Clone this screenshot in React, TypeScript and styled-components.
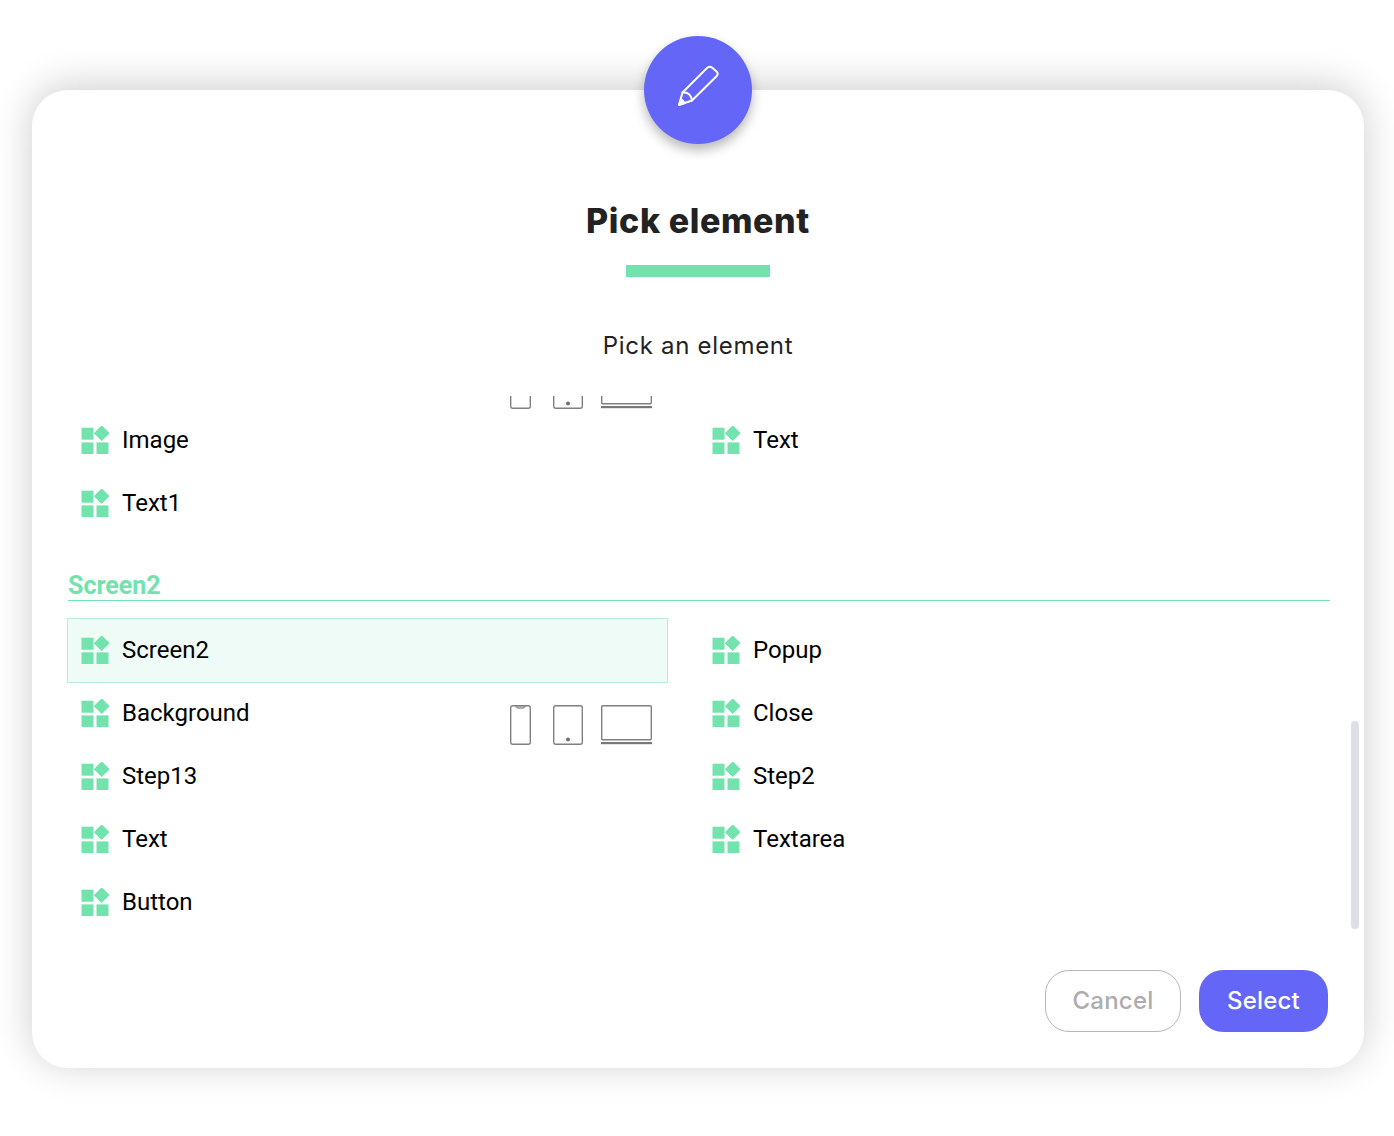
import React from "react";
import styled, { createGlobalStyle } from "styled-components";

const Global = createGlobalStyle`
  html, body { margin: 0; padding: 0; background: #fff; }
  body { font-family: "Roboto", "Liberation Sans", sans-serif; }
`;

const Page = styled.div`
  width: 1394px;
  height: 1136px;
  padding: 90px 30px 0 32px;
  box-sizing: border-box;
  overflow: hidden;
`;

const Card = styled.section`
  position: relative;
  width: 1332px;
  height: 978px;
  box-sizing: border-box;
  padding: 111px 34px 36px 36px;
  background: #fff;
  border-radius: 36px;
  box-shadow: 0 -4px 40px rgba(0, 0, 0, 0.2);
  display: flex;
  flex-direction: column;
`;

const Badge = styled.div`
  position: absolute;
  left: 612px;
  top: -54px;
  width: 108px;
  height: 108px;
  box-sizing: border-box;
  padding-bottom: 8px;
  border-radius: 50%;
  background: #6366f7;
  box-shadow: 0 6px 12px rgba(0, 0, 0, 0.28);
  display: flex;
  align-items: center;
  justify-content: center;
`;

const Title = styled.h1`
  margin: 0;
  height: 40px;
  font-family: "Inter", "Liberation Sans", sans-serif;
  font-weight: 800;
  font-size: 34px;
  letter-spacing: 0.6px;
  line-height: 40px;
  color: #222;
  text-align: center;
  transform: translateX(-1px);
`;

const Accent = styled.div`
  align-self: center;
  width: 144px;
  height: 12px;
  margin-top: 24px;
  margin-right: 2px;
  background: #72e3ad;
`;

const Subtitle = styled.p`
  margin: 53px 0 0;
  padding-top: 1px;
  height: 29px;
  font-family: "Inter", "Liberation Sans", sans-serif;
  font-weight: 400;
  font-size: 24px;
  letter-spacing: 0.7px;
  line-height: 30px;
  color: #222;
  text-align: center;
  transform: translateX(-1px);
`;

const ListWindow = styled.div`
  margin: 36px 0 0 -1px;
  padding-left: 1px;
  height: 554px;
  overflow: hidden;
  flex: none;
`;

const ListInner = styled.div`
  margin-top: -50px;
`;

const Grid = styled.div`
  display: grid;
  grid-template-columns: 599px 1fr;
  column-gap: 32px;
  grid-auto-rows: 63px;
`;

const Item = styled.div<{ $selected?: boolean }>`
  display: flex;
  align-items: center;
  gap: 13px;
  padding: 0 15px 2px 13px;
  font-size: 24px;
  color: #000;
  background: ${(p) => (p.$selected ? "#eefbf6" : "transparent")};
  box-shadow: ${(p) => (p.$selected ? "0 0 0 1px #b5efd6" : "none")};
`;

const Devices = styled.div`
  margin-left: auto;
  margin-bottom: -2px;
  align-self: flex-end;
  display: flex;
  align-items: flex-end;
`;

const DeviceSlot = styled.div<{ $left: number }>`
  display: flex;
  margin-left: ${(p) => p.$left}px;
`;

const Spacer = styled.div``;

const SectionTitle = styled.h2`
  margin: 31px 0 18px;
  height: 34px;
  line-height: 40px;
  font-size: 25px;
  font-weight: 700;
  color: #72e3ad;
  border-bottom: 1px solid #72e3ad;
`;

const Thumb = styled.div`
  position: absolute;
  right: 5px;
  top: 631px;
  width: 8px;
  height: 208px;
  border-radius: 4px;
  background: #dedee8;
`;

const Actions = styled.div`
  margin-top: 20px;
  padding-right: 2px;
  display: flex;
  justify-content: flex-end;
  gap: 18px;
`;

const Button = styled.button<{ $primary?: boolean }>`
  height: 62px;
  width: ${(p) => (p.$primary ? "129px" : "136px")};
  box-sizing: border-box;
  border-radius: 24px;
  border: ${(p) => (p.$primary ? "none" : "1px solid #b8b8b8")};
  background: ${(p) => (p.$primary ? "#6366f7" : "#fff")};
  color: ${(p) => (p.$primary ? "#fff" : "#adadad")};
  font-family: "Inter", "Liberation Sans", sans-serif;
  font-weight: 500;
  font-size: 24px;
  letter-spacing: 0.2px;
  padding: 0 0 2px;
`;

const ElementIcon = () => (
  <svg width="28" height="28" viewBox="0 0 28 28" fill="#72e3ad" style={{ flex: "none" }}>
    <rect x="0.5" y="1.7" width="12" height="12" />
    <rect x="0.5" y="16.4" width="12" height="12" />
    <rect x="15.5" y="16.4" width="12" height="12" />
    <path d="M20.7 -0.7 L28.6 7.2 L20.7 15.1 L12.8 7.2 Z" />
  </svg>
);

const PencilIcon = () => (
  <svg width="44" height="44" viewBox="0 0 44 44" fill="none" stroke="#fff" strokeWidth="2" strokeLinejoin="round" strokeLinecap="round">
    <path d="M3 41 L6.5 28.5 L31 4 Q33.5 1.6 36 3.6 L40.5 7.4 Q42.8 9.8 40.5 12.2 L16 36.5 Z" />
    <path d="M6.5 28.5 Q14.5 27.5 16 36.5" />
    <path d="M4.5 35.5 Q7.5 34.5 9 39.5 L3 41 Z" fill="#fff" strokeWidth="1" />
  </svg>
);

const PhoneIcon = () => (
  <svg width="21" height="40" viewBox="0 0 21 40" fill="none" stroke="#808080" strokeWidth="1.4">
    <rect x="0.7" y="0.7" width="19.6" height="38.6" rx="2" />
    <path d="M5.5 1 Q6 3.2 8 3.2 H13 Q15 3.2 15.5 1 Z" fill="#bbb" strokeWidth="0.8" />
  </svg>
);

const TabletIcon = () => (
  <svg width="30" height="40" viewBox="0 0 30 40" fill="none" stroke="#808080" strokeWidth="1.4">
    <rect x="0.7" y="0.7" width="28.6" height="38.6" rx="2" />
    <circle cx="15" cy="34.5" r="2" fill="#707070" stroke="none" />
  </svg>
);

const LaptopIcon = () => (
  <svg width="51" height="40" viewBox="0 0 51 40" fill="none" stroke="#808080" strokeWidth="1.4">
    <rect x="0.7" y="0.7" width="49.6" height="34" rx="1" />
    <rect x="0" y="37" width="51" height="2.2" fill="#787878" stroke="none" />
  </svg>
);

const DeviceIcons = () => (
  <Devices>
    <PhoneIcon />
    <DeviceSlot $left={22}>
      <TabletIcon />
    </DeviceSlot>
    <DeviceSlot $left={18}>
      <LaptopIcon />
    </DeviceSlot>
  </Devices>
);

const Element = ({ name, selected, devices }: { name: string; selected?: boolean; devices?: boolean }) => (
  <Item $selected={selected}>
    <ElementIcon />
    <span>{name}</span>
    {devices && <DeviceIcons />}
  </Item>
);

export default function App() {
  return (
    <Page>
      <Global />
      <Card>
        <Badge>
          <PencilIcon />
        </Badge>
        <Title>Pick element</Title>
        <Accent />
        <Subtitle>Pick an element</Subtitle>
        <ListWindow>
          <ListInner>
            <Grid>
              <Item>
                <DeviceIcons />
              </Item>
              <Spacer />
              <Element name="Image" />
              <Element name="Text" />
              <Element name="Text1" />
            </Grid>
            <SectionTitle>Screen2</SectionTitle>
            <Grid>
              <Element name="Screen2" selected />
              <Element name="Popup" />
              <Element name="Background" devices />
              <Element name="Close" />
              <Element name="Step13" />
              <Element name="Step2" />
              <Element name="Text" />
              <Element name="Textarea" />
              <Element name="Button" />
            </Grid>
          </ListInner>
        </ListWindow>
        <Thumb />
        <Actions>
          <Button>Cancel</Button>
          <Button $primary>Select</Button>
        </Actions>
      </Card>
    </Page>
  );
}
